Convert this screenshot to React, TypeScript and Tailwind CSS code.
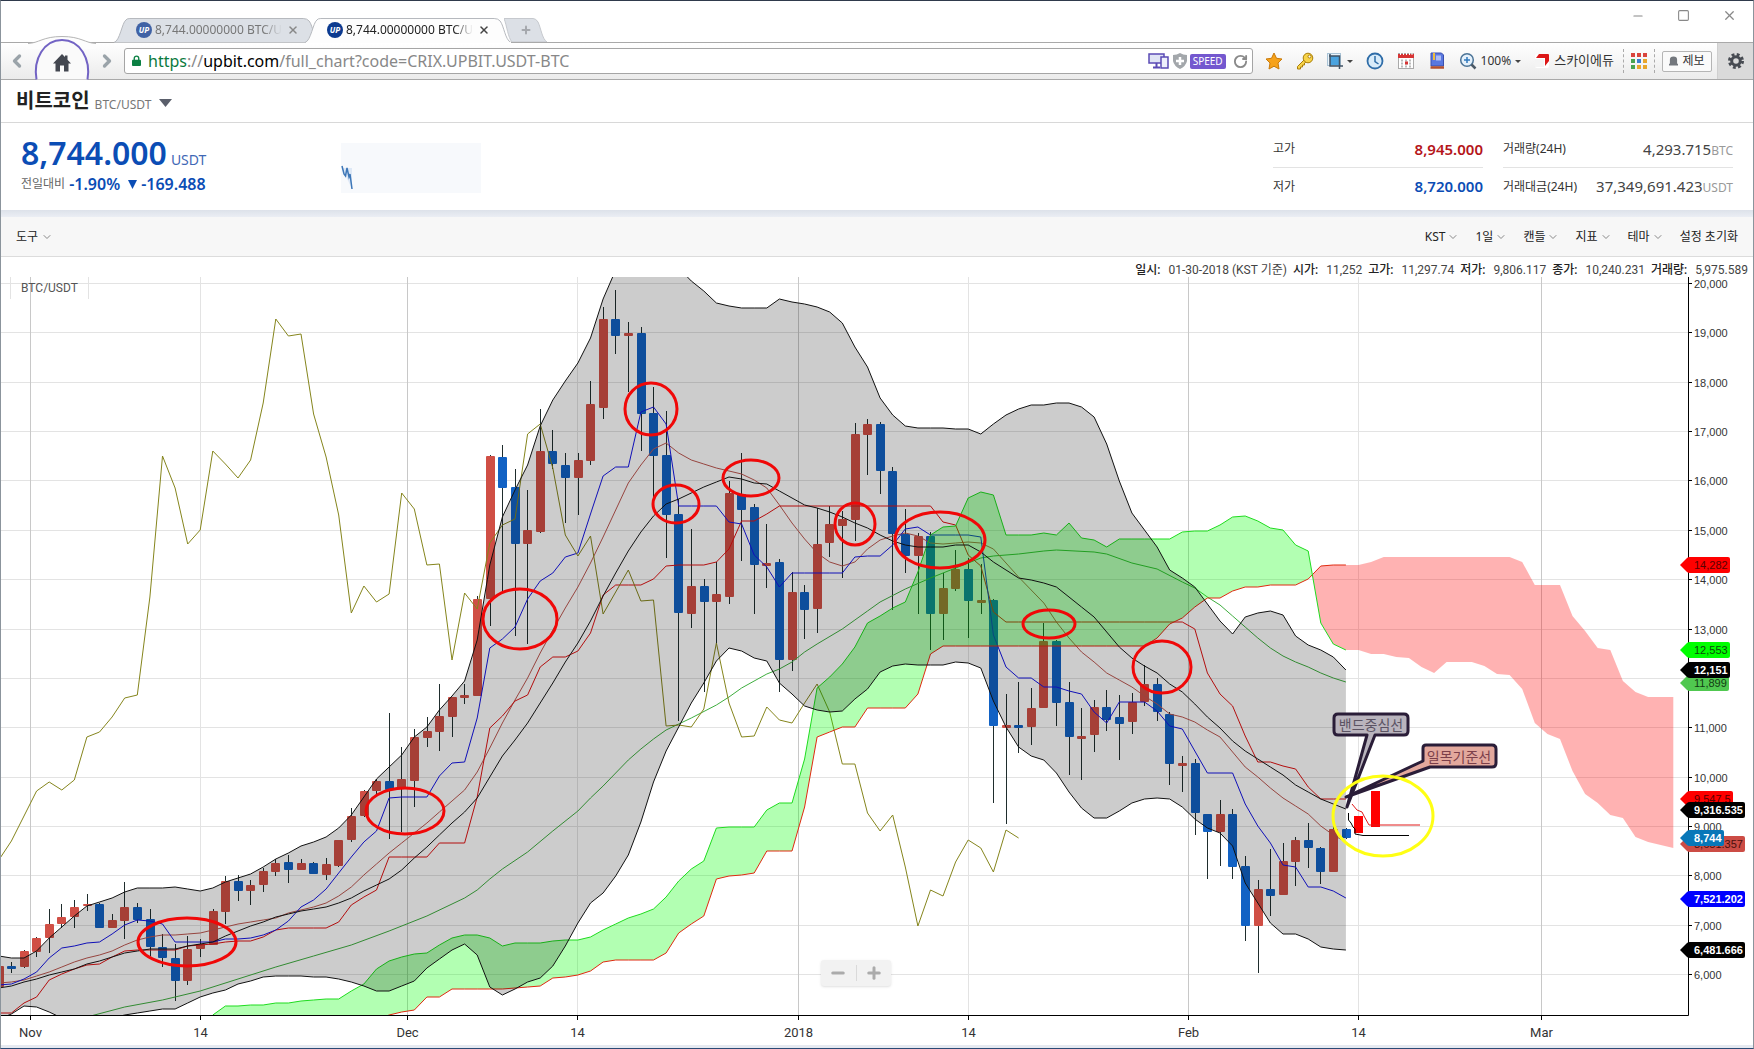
import { useState } from 'react';
import type { ReactNode } from 'react';
import { ChevronDown, ChevronLeft, ChevronRight, Minus, Plus, RotateCw, Square, X } from 'lucide-react';

// One slot per trading day; slot 16 is Nov 14.
const slotX = (n: number) => -1.2 + 12.59 * n;

// direction, body top, body bottom, wick top, wick bottom
type Candle = ['u' | 'd', number, number, number, number];

const candles: Candle[] = [
    ['u', 966, 987, 966, 987], ['d', 966, 969, 962, 973], ['u', 951, 967, 950, 968], ['u', 938, 952, 937, 957],
    ['u', 924, 938, 909, 953], ['u', 917, 924, 904, 928], ['u', 907, 917, 900, 928], ['u', 904, 906, 894, 911],
    ['d', 904, 928, 903, 928], ['u', 920, 928, 914, 928], ['u', 907, 921, 882, 939], ['d', 907, 920, 903, 923],
    ['d', 919, 947, 909, 956], ['d', 947, 958, 934, 967], ['d', 958, 981, 944, 1001], ['u', 949, 981, 936, 985],
    ['u', 944, 949, 939, 957], ['u', 911, 945, 909, 945], ['u', 881, 912, 876, 924], ['d', 881, 891, 875, 901],
    ['u', 885, 891, 880, 905], ['u', 871, 885, 868, 892], ['u', 863, 872, 859, 876], ['d', 862, 870, 855, 883],
    ['u', 863, 870, 859, 870], ['d', 863, 874, 862, 874], ['u', 864, 875, 858, 880], ['u', 840, 866, 840, 867],
    ['u', 816, 840, 808, 842], ['u', 791, 816, 790, 817], ['u', 781, 791, 779, 794], ['d', 781, 790, 713, 839],
    ['u', 779, 789, 747, 832], ['u', 737, 781, 729, 807], ['u', 731, 738, 717, 747], ['u', 716, 732, 684, 751],
    ['u', 697, 717, 697, 737], ['u', 695, 698, 684, 704], ['u', 599, 696, 596, 696], ['u', 456, 599, 455, 626],
    ['d', 457, 488, 445, 592], ['d', 487, 544, 469, 636], ['u', 530, 544, 490, 644], ['u', 451, 532, 409, 533],
    ['d', 451, 464, 430, 469], ['d', 465, 478, 453, 523], ['u', 460, 478, 453, 515], ['u', 404, 461, 381, 465],
    ['u', 319, 408, 307, 419], ['d', 319, 336, 290, 354], ['u', 333, 336, 322, 392], ['d', 333, 414, 327, 451],
    ['d', 413, 456, 387, 497], ['d', 455, 515, 411, 558], ['d', 514, 613, 499, 721], ['u', 586, 614, 529, 628],
    ['d', 586, 602, 579, 692], ['u', 594, 602, 562, 643], ['u', 493, 597, 481, 604], ['d', 494, 510, 453, 561],
    ['d', 507, 565, 504, 614], ['u', 563, 566, 524, 588], ['d', 562, 660, 559, 692], ['u', 592, 660, 572, 671],
    ['d', 592, 610, 585, 639], ['u', 544, 609, 508, 633], ['u', 524, 543, 506, 557], ['u', 519, 526, 511, 578],
    ['u', 434, 520, 423, 541], ['u', 424, 435, 419, 475], ['d', 424, 471, 422, 494], ['d', 471, 534, 467, 610],
    ['d', 534, 556, 509, 573], ['u', 536, 556, 533, 614], ['d', 536, 614, 532, 650], ['u', 588, 614, 573, 640],
    ['u', 569, 589, 550, 591], ['d', 569, 601, 558, 638], ['u', 600, 603, 564, 614], ['d', 600, 726, 599, 803],
    ['u', 725, 728, 694, 824], ['d', 725, 728, 682, 753], ['u', 708, 727, 688, 745], ['u', 641, 708, 623, 708],
    ['d', 641, 703, 640, 726], ['d', 702, 737, 682, 775], ['u', 736, 739, 708, 780], ['u', 707, 735, 700, 752],
    ['d', 707, 720, 690, 731], ['d', 717, 724, 695, 760], ['u', 702, 722, 693, 734], ['u', 684, 702, 665, 706],
    ['d', 684, 712, 678, 721], ['d', 714, 764, 712, 785], ['u', 763, 766, 756, 792], ['d', 763, 813, 759, 835],
    ['d', 814, 832, 814, 879], ['u', 814, 832, 800, 866], ['d', 814, 867, 809, 879], ['d', 866, 926, 856, 941],
    ['u', 889, 926, 880, 973], ['d', 889, 896, 849, 916], ['u', 861, 895, 843, 895], ['u', 840, 862, 837, 886],
    ['d', 840, 848, 823, 868], ['d', 848, 872, 847, 884], ['u', 829, 872, 826, 872], ['d', 829, 838, 828, 839],
];

const upperBand = [
    956, 958, 958, 951, 938, 927, 916, 906, 902, 898, 892, 888, 888, 888, 887, 889, 891, 888, 882, 878, 874, 867, 859,
    853, 846, 842, 837, 828, 815, 797, 779, 767, 755, 737, 727, 710, 696, 681, 640, 565, 517, 490, 465, 426, 400, 381,
    363, 338, 299, 270, 255, 250, 250, 258, 268, 281, 291, 303, 306, 308, 308, 308, 299, 302, 304, 307, 312, 323, 347,
    367, 398, 415, 426, 428, 428, 428, 429, 429, 434, 424, 415, 409, 405, 405, 403, 403, 407, 417, 444, 481, 513, 530,
    547, 570, 578, 587, 604, 621, 634, 617, 613, 611, 615, 636, 645, 650, 657, 670,
];

const lowerBand = [
    1019, 1014, 1006, 1007, 1012, 1018, 1020, 1020, 1020, 1018, 1015, 1013, 1011, 1009, 1009, 1003, 997, 993, 990, 984,
    981, 977, 976, 976, 976, 977, 977, 979, 982, 986, 991, 991, 986, 981, 968, 959, 950, 944, 955, 987, 995, 989, 982,
    978, 966, 946, 923, 903, 893, 876, 855, 822, 782, 751, 727, 703, 683, 661, 648, 651, 658, 661, 683, 694, 706, 710,
    712, 711, 699, 689, 672, 666, 664, 665, 665, 665, 662, 663, 668, 701, 727, 747, 756, 760, 773, 792, 808, 818, 818,
    811, 803, 799, 798, 799, 807, 819, 828, 833, 846, 883, 903, 923, 934, 934, 939, 947, 949, 950,
];

const middleBand = [
    988, 986, 982, 979, 975, 972, 969, 964, 961, 957, 953, 951, 949, 949, 949, 946, 944, 942, 936, 931, 926, 922, 917,
    914, 911, 909, 907, 903, 898, 891, 885, 879, 870, 858, 847, 835, 823, 812, 798, 777, 756, 740, 723, 703, 683, 662,
    643, 621, 596, 573, 551, 532, 516, 504, 499, 493, 487, 482, 477, 479, 483, 484, 491, 498, 505, 508, 512, 517, 523,
    528, 535, 541, 545, 547, 547, 547, 545, 545, 552, 562, 570, 578, 580, 583, 587, 597, 607, 617, 632, 647, 658, 666,
    673, 684, 692, 704, 717, 728, 741, 751, 759, 767, 775, 785, 792, 799, 804, 809,
];

const conversionLine = [
    985, 984, 979, 972, 958, 948, 946, 943, 942, 934, 925, 920, 921, 924, 942, 942, 942, 942, 939, 939, 938, 935, 930,
    921, 907, 900, 889, 873, 857, 842, 831, 798, 797, 797, 797, 776, 763, 762, 718, 648, 639, 627, 599, 581, 573, 557,
    553, 514, 476, 467, 467, 412, 407, 424, 506, 506, 506, 506, 522, 524, 555, 567, 587, 573, 573, 573, 573, 573, 557,
    556, 556, 545, 529, 527, 535, 535, 535, 535, 537, 635, 667, 678, 678, 687, 687, 691, 694, 712, 723, 702, 702, 702,
    711, 726, 729, 751, 773, 773, 773, 804, 826, 843, 865, 867, 887, 887, 891, 898,
];

const baseLine = [
    1013, 1013, 1003, 997, 980, 974, 969, 965, 964, 957, 951, 950, 950, 950, 950, 946, 945, 944, 942, 941, 941, 937,
    930, 928, 928, 928, 928, 922, 905, 897, 890, 857, 857, 857, 857, 843, 843, 843, 797, 728, 716, 701, 695, 667, 657,
    657, 651, 633, 595, 585, 585, 585, 579, 566, 565, 565, 565, 562, 549, 521, 521, 514, 506, 506, 506, 506, 506, 506,
    506, 506, 506, 506, 506, 506, 506, 522, 525, 555, 566, 612, 622, 622, 622, 622, 622, 622, 622, 622, 622, 622, 622,
    622, 622, 622, 622, 629, 673, 694, 706, 736, 762, 762, 766, 769, 787, 799, 799, 799,
];

const shortAverage = [
    983, 982, 980, 976, 972, 967, 962, 958, 955, 951, 945, 940, 937, 935, 935, 934, 933, 930, 927, 924, 922, 920, 918,
    913, 910, 907, 903, 896, 887, 875, 864, 853, 843, 833, 823, 812, 801, 790, 772, 748, 723, 700, 678, 653, 630, 608,
    587, 563, 537, 510, 483, 465, 449, 443, 453, 460, 464, 468, 471, 474, 480, 488, 505, 523, 539, 553, 562, 566, 562,
    549, 540, 536, 533, 536, 543, 544, 543, 542, 543, 549, 563, 577, 590, 603, 622, 638, 652, 662, 673, 680, 687, 696,
    704, 714, 717, 722, 730, 737, 752, 767, 777, 788, 798, 806, 814, 826, 835, 842,
];

const laggingSpan = [
    860, 841, 816, 791, 782, 790, 780, 737, 732, 717, 698, 695, 597, 456, 488, 544, 530, 451, 464, 478, 460, 403, 319,
    336, 334, 414, 457, 515, 613, 586, 602, 594, 493, 509, 565, 564, 660, 593, 609, 543, 525, 519, 434, 424, 468, 535,
    556, 536, 614, 592, 570, 601, 600, 726, 725, 727, 709, 643, 703, 737, 736, 707, 720, 723, 703, 684, 712, 764, 764,
    813, 831, 815, 867, 926, 890, 896, 862, 840, 848, 872, 830, 838,
];

const longAverage: [number, number][] = [
    [7, 1017], [10, 1007], [13, 1000], [16, 991], [19, 979], [22, 967], [25, 956], [28, 945], [31, 931], [34, 916],
    [37, 898], [38, 890], [39, 879], [40, 869], [42, 852], [44, 831], [46, 811], [47, 798], [48, 786], [49, 773],
    [50, 760], [51, 749], [52, 739], [53, 730], [54, 724], [55, 718], [57, 705], [58, 697], [59, 688], [61, 674],
    [62, 669], [63, 662], [64, 652], [65, 644], [67, 629], [68, 620], [69, 611], [70, 602], [72, 589], [74, 578],
    [76, 568], [78, 558], [79, 556], [81, 554], [83, 551], [84, 550], [87, 552], [88, 554], [90, 563], [92, 569],
    [94, 582], [95, 588], [96, 597], [97, 605], [98, 616], [99, 627], [100, 638], [101, 648], [102, 656], [103, 662],
    [104, 667], [105, 673], [106, 678], [107, 682],
];

// Both spans start at slot 17 and run 26 days past the last candle.
const CLOUD_START = 17;
const spanA = [
    1015, 1006, 1006, 1005, 1005, 1003, 1003, 1001, 1000, 999, 999, 991, 984, 969, 961, 957, 954, 953, 945, 938, 935,
    935, 938, 946, 943, 943, 943, 941, 940, 940, 937, 930, 924, 918, 914, 909, 897, 881, 869, 861, 828, 827, 827, 827,
    810, 803, 803, 759, 688, 677, 664, 647, 623, 616, 608, 602, 572, 535, 527, 526, 498, 492, 495, 535, 535, 535, 533,
    535, 523, 538, 540, 547, 539, 539, 539, 539, 539, 532, 531, 531, 525, 517, 516, 521, 528, 530, 545, 551, 623, 644,
    650, 650, 654, 654, 657, 658, 667, 673, 662, 662, 662, 666, 674, 675, 689, 723, 734, 739, 771, 794, 803, 815, 818,
    837, 842, 845, 848,
];
const spanB = [
    1030, 1030, 1030, 1030, 1030, 1030, 1030, 1030, 1030, 1030, 1030, 1030, 1030, 1020, 1015, 1012, 1010, 997, 997,
    989, 989, 989, 989, 989, 988, 987, 986, 978, 977, 975, 971, 962, 960, 960, 960, 960, 953, 933, 924, 916, 879, 876,
    875, 873, 851, 851, 851, 807, 737, 732, 727, 727, 708, 708, 708, 708, 694, 654, 646, 646, 646, 646, 646, 646, 646,
    646, 646, 646, 646, 646, 646, 646, 646, 646, 646, 638, 624, 618, 607, 598, 598, 591, 587, 587, 585, 585, 585, 579,
    566, 565, 565, 565, 562, 557, 557, 557, 557, 557, 557, 557, 557, 557, 557, 557, 562, 585, 585, 585, 616, 631, 648,
    650, 681, 692, 697, 697, 697,
];

// The spans swap places just after slot 104.
const CROSS: [number, number] = [104.33, 575];

const toSlots = (ys: number[], start = 0): [number, number][] => ys.map((y, i) => [start + i, y]);
const toPoints = (pts: [number, number][]) => pts.map(([n, y]) => `${slotX(n).toFixed(1)},${y}`).join(' ');

const cloudA = toSlots(spanA, CLOUD_START);
const cloudB = toSlots(spanB, CLOUD_START);
const bullCloud = [
    ...cloudA.filter(([n]) => n < CROSS[0]),
    CROSS,
    ...cloudB.filter(([n]) => n < CROSS[0]).reverse(),
];
const bearCloud = [
    CROSS,
    ...cloudB.filter(([n]) => n > CROSS[0]),
    ...cloudA.filter(([n]) => n > CROSS[0]).reverse(),
];
const LAST = candles.length - 1;

const priceTicks = Array.from({ length: 15 }, (_, i) => ({
    label: `${20 - i},000`,
    y: Math.round(283 + i * 49.36) + 0.5,
}));

const dateTicks = [
    { x: 30.5, label: 'Nov', major: true },
    { x: 200.5, label: '14', major: false },
    { x: 407.5, label: 'Dec', major: true },
    { x: 577.5, label: '14', major: false },
    { x: 798.5, label: '2018', major: true },
    { x: 968.5, label: '14', major: false },
    { x: 1188.5, label: 'Feb', major: true },
    { x: 1358.5, label: '14', major: false },
    { x: 1541.5, label: 'Mar', major: true },
];

const priceTags = [
    { y: 565, right: 1730, text: '14,282', fill: '#ff0000', color: '#5a0000' },
    { y: 650, right: 1730, text: '12,553', fill: '#00ff00', color: '#0b4a0b' },
    { y: 683, right: 1729, text: '11,899', fill: '#50c850', color: '#123c12' },
    { y: 670, right: 1730, text: '12,151', fill: '#000000', color: '#ffffff' },
    { y: 799, right: 1733, text: '9,547.5', fill: '#ff0000', color: '#5a0000' },
    { y: 810, right: 1745, text: '9,316.535', fill: '#000000', color: '#ffffff' },
    { y: 844, right: 1745, text: '8,651.357', fill: '#cc4c45', color: '#4a0f0c' },
    { y: 838, right: 1724, text: '8,744', fill: '#0877b8', color: '#ffffff' },
    { y: 899, right: 1745, text: '7,521.202', fill: '#0000ff', color: '#ffffff' },
    { y: 950, right: 1745, text: '6,481.666', fill: '#000000', color: '#ffffff' },
];

// cx, cy, rx, ry
const circles = [
    [187, 942, 49, 24],
    [405, 811, 39, 23],
    [520, 619, 37, 30],
    [651, 409, 26, 26],
    [676, 504, 23, 19],
    [751, 478, 28, 18],
    [855, 524, 20, 21],
    [940, 540, 45, 28],
    [1049, 624, 26, 14],
    [1162, 667, 29, 26],
];

function PriceChart() {
    const band = toPoints([...toSlots(upperBand), ...toSlots(lowerBand).reverse()]);

    return (
        <svg viewBox="1 277 1752 768" className="block w-full h-auto" role="img" aria-label="BTC/USDT">
            <defs>
                <clipPath id="plot">
                    <rect x="1" y="277" width="1688" height="738" />
                </clipPath>
            </defs>

            {/* Grid */}
            {priceTicks.map((t) => (
                <line key={t.label} x1="1" x2="1688" y1={t.y} y2={t.y} stroke="#e3e3e3" />
            ))}
            {dateTicks.map((t) => (
                <line key={t.x} x1={t.x} x2={t.x} y1="277" y2="1015" stroke={t.major ? '#c8c8c8' : '#e3e3e3'} />
            ))}

            <g clipPath="url(#plot)" fill="none">
                {/* Candles */}
                {candles.map(([dir, top, bottom, high, low], n) => {
                    const x = Math.floor(slotX(n) + 0.2);
                    return (
                        <g key={n}>
                            <line x1={x + 0.5} x2={x + 0.5} y1={high} y2={low} stroke="#1f2d2d" />
                            <rect x={x - 4} y={top} width="9" height={bottom - top} rx="1" fill={dir === 'u' ? '#d04f45' : '#1262c4'} />
                        </g>
                    );
                })}

                {/* Indicator lines */}
                <polyline points={toPoints(longAverage)} stroke="#3fae3f" />
                <polyline points={toPoints(toSlots(shortAverage))} stroke="#bd5750" />
                <polyline points={toPoints(toSlots(baseLine))} stroke="#e01212" />
                <polyline points={toPoints(toSlots(conversionLine))} stroke="#1414e6" />
                <polyline points={toPoints(toSlots(laggingSpan))} stroke="#85851c" />

                {/* Cloud */}
                <polygon points={toPoints(bullCloud)} fill="#00ff00" fillOpacity="0.3" />
                <polygon points={toPoints(bearCloud)} fill="#ff0000" fillOpacity="0.3" />
                <polyline points={toPoints(cloudB.filter(([n]) => n <= LAST))} stroke="#e02a10" />
                <polyline points={toPoints(cloudA.filter(([n]) => n <= LAST))} stroke="#1fdc1f" />

                {/* Bollinger band */}
                <polygon points={band} fill="#000000" fillOpacity="0.2" />
                <polyline points={toPoints(toSlots(upperBand))} stroke="#111111" />
                <polyline points={toPoints(toSlots(lowerBand))} stroke="#111111" />
                <polyline points={toPoints(toSlots(middleBand))} stroke="#111111" />
            </g>

            {/* Axes */}
            <path d="M1 1015.5H1688.5V277" fill="none" stroke="#000000" />
            <g fontFamily="'Liberation Sans', Arial, sans-serif" fontSize="11" fill="#333333">
                {priceTicks.map((t) => (
                    <g key={t.label}>
                        <line x1="1688" x2="1692" y1={t.y} y2={t.y} stroke="#000000" />
                        <text x="1694" y={t.y + 4}>{t.label}</text>
                    </g>
                ))}
            </g>
            <g fontFamily="Roboto, 'Liberation Sans', sans-serif" fontSize="13" fill="#333333" textAnchor="middle">
                {dateTicks.map((t) => (
                    <g key={t.x}>
                        <line x1={t.x} x2={t.x} y1="1015" y2="1020" stroke="#000000" />
                        <text x={t.x} y="1037">{t.label}</text>
                    </g>
                ))}
            </g>

            {/* Price tags */}
            <g fontFamily="'Liberation Sans', Arial, sans-serif" fontSize="11">
                {priceTags.map((t) => (
                    <g key={t.text}>
                        <path
                            d={`M1680 ${t.y}L1687 ${t.y - 7}Q1688 ${t.y - 8} 1690 ${t.y - 8}H${t.right - 2}Q${t.right} ${t.y - 8} ${t.right} ${t.y - 6}V${t.y + 6}Q${t.right} ${t.y + 8} ${t.right - 2} ${t.y + 8}H1690Q1688 ${t.y + 8} 1687 ${t.y + 7}Z`}
                            fill={t.fill}
                        />
                        <text x="1694" y={t.y + 4} fill={t.color} fontWeight={t.color === '#ffffff' ? 700 : 400}>
                            {t.text}
                        </text>
                    </g>
                ))}
            </g>

            {/* Symbol label */}
            <path d="M10.5 277V299M88.5 277V299" stroke="#e3e3e3" />
            <text x="21" y="292" fontFamily="Roboto, 'Liberation Sans', sans-serif" fontSize="12" fill="#555555">
                BTC/USDT
            </text>

            {/* Hand-drawn notes */}
            <g fill="none" stroke="#f00808" strokeWidth="3">
                {circles.map(([cx, cy, rx, ry]) => (
                    <ellipse key={cx} cx={cx} cy={cy} rx={rx} ry={ry} />
                ))}
            </g>
            <g stroke="#2a1d38" strokeWidth="3" strokeLinejoin="round">
                <path d="M1426 745H1492Q1496 745 1496 749V763Q1496 767 1492 767H1430L1346 797L1423 761V748Q1423 745 1426 745Z" fill="#e3a89d" />
                <path d="M1338 714H1404Q1408 714 1408 718V731Q1408 735 1404 735H1375L1347 807L1367 735H1338Q1334 735 1334 731V718Q1334 714 1338 714Z" fill="#b9b4bd" />
            </g>
            <g fontFamily="'Noto Sans CJK KR', sans-serif" fontSize="14" textAnchor="middle">
                <text x="1371" y="730" fill="#5b5363">밴드중심선</text>
                <text x="1459" y="762" fill="#7c3f4a">일목기준선</text>
            </g>
            <rect x="1354" y="816" width="9" height="17" fill="#ff0000" />
            <rect x="1371" y="791" width="9" height="36" fill="#ff0000" />
            <path d="M1352 804L1357 810L1362 812L1364 816L1369 825H1420" fill="none" stroke="#e01818" />
            <path d="M1348.5 813V820L1351 823L1353 827L1355 829V834L1363 835.5H1409" fill="none" stroke="#000000" />
            <ellipse cx="1383" cy="816" rx="50" ry="40" fill="none" stroke="#ffff14" strokeWidth="3" />
        </svg>
    );
}

function BrowserTab({ active = false }: { active?: boolean }) {
    return (
        <div className={`relative h-6 w-[207px] flex items-center pl-[22px] ${active ? '-ml-[16px] z-10' : ''}`}>
            <svg className="absolute inset-0 w-full h-[25px]" viewBox="0 0 209 25" preserveAspectRatio="none">
                <path
                    d="M0 24.5C6 23 8 5 12 2Q13 .5 16 .5H191Q195 .5 197 3C201 8 202 22 208 24.5"
                    fill={active ? '#fdfdfd' : '#dce0e6'}
                    stroke="#b5b8bd"
                />
                {active && <path d="M1 25H208" stroke="#fdfdfd" strokeWidth="2" />}
            </svg>
            <span className={`relative w-4 h-4 rounded-full flex items-center justify-center text-[8px] italic font-bold text-white ${active ? 'bg-[#0b3a8f]' : 'bg-[#4062a5]'}`}>
                UP
            </span>
            <button className={`relative ml-[3px] whitespace-nowrap text-left text-[12px] mask-r-from-85% ${active ? 'text-[#222]' : 'text-[#777]'}`}>
                8,744.00000000 BTC/U
            </button>
            <button aria-label="Close tab" className={`relative ml-auto mr-[22px] ${active ? 'text-[#444]' : 'text-[#888]'}`}>
                <X size={12} strokeWidth={3} />
            </button>
        </div>
    );
}

function TitleBar() {
    return (
        <div className="h-[41px] flex items-end bg-white">
            <div className="flex items-end pl-[113px]">
                <BrowserTab />
                <BrowserTab active />
                <button aria-label="New tab" className="relative -ml-[8px] w-[44px] h-6 flex items-center justify-center text-[#a5a8ad]">
                    <svg className="absolute inset-0 w-full h-full" viewBox="0 0 44 24" preserveAspectRatio="none">
                        <path d="M0 .5H29Q32 .5 34 4C37 10 38 21 43 24H8C4 20 3 8 0 .5Z" fill="#dce0e6" stroke="#c6c9ce" />
                    </svg>
                    <Plus size={12} strokeWidth={4} className="relative" />
                </button>
            </div>
            <div className="ml-auto self-start flex items-center gap-[32px] pr-4 pt-[7px] text-[#888]">
                <button aria-label="Minimize"><Minus size={14} strokeWidth={2} /></button>
                <button aria-label="Maximize"><Square size={13} strokeWidth={2} /></button>
                <button aria-label="Close"><X size={15} strokeWidth={2} /></button>
            </div>
        </div>
    );
}

function ToolIcon({ label, children }: { label: string; children: ReactNode }) {
    return (
        <button aria-label={label} className="w-[18px] h-[18px] shrink-0">
            <svg viewBox="0 0 18 18" className="w-full h-full">{children}</svg>
        </button>
    );
}

const Caret = () => (
    <svg viewBox="0 0 6 3" className="w-[6px] h-[3px]">
        <path d="M0 0H6L3 3Z" fill="#444" />
    </svg>
);

function Toolbar() {
    return (
        <div className="h-[38px] flex items-center border-y border-[#a9a9a9] bg-gradient-to-b from-white to-[#ebebeb]">
            <button aria-label="Back" className="ml-[6px] text-[#9aa3a9]"><ChevronLeft size={20} strokeWidth={4} /></button>
            <button aria-label="Home" className="relative z-10 w-[70px] h-[45px] -mt-[8px]">
                <svg viewBox="0 0 70 45" className="w-full h-full">
                    <path d="M1 8.5C12 8 16 1.5 35 1.5S58 8 69 8.5V14H1Z" fill="#fdfdfd" />
                    <path d="M1 8.5C12 8 16 1.5 35 1.5S58 8 69 8.5" fill="none" stroke="#b5b5b5" />
                    <path d="M9.5 44.5C6 24 17 5 35 5S64 24 60.5 44.5" fill="#fafafa" stroke="#7263c4" strokeWidth="2" />
                    <path d="M35 19L26 28.500H28.500V36.500H33V30.500H37V36.500H41.500V28.500H44L40.500 24.800V20.500H38V22Z" fill="#434750" />
                </svg>
            </button>
            <button aria-label="Forward" className="text-[#9aa3a9]"><ChevronRight size={20} strokeWidth={4} /></button>

            <div className="ml-[7px] flex-1 h-[26px] flex items-center bg-white border border-[#a5a5a5] rounded-[3px] pl-[7px] pr-1">
                <svg viewBox="0 0 10 13" className="w-[9px] h-3 shrink-0">
                    <path d="M2.500 6V3.500a2.500 2.500 0 0 1 5 0V6" fill="none" stroke="#0b8043" strokeWidth="1.500" />
                    <rect y="5" width="10" height="7" rx="1" fill="#0b8043" />
                </svg>
                <a href="https://upbit.com/full_chart?code=CRIX.UPBIT.USDT-BTC" className="ml-[7px] flex-1 whitespace-nowrap text-[16px] leading-6 text-[#888]">
                    <span className="text-[#0b7a3e]">https</span>://<span className="text-black">upbit.com</span>/full_chart?code=CRIX.UPBIT.USDT-BTC
                </a>
                <div className="flex items-center gap-[3px]">
                    <svg viewBox="0 0 22 18" className="w-[22px] h-[18px]">
                        <path d="M1 2H16V11H1Z" fill="#dfe3f5" stroke="#5b4bb5" strokeWidth="1.500" />
                        <path d="M5 15.500H12M8.500 11V15" stroke="#5b4bb5" strokeWidth="2" />
                        <path d="M13 5H20V16H13Z" fill="#eef0fb" stroke="#5b4bb5" strokeWidth="1.500" />
                    </svg>
                    <svg viewBox="0 0 14 16" className="w-[14px] h-4">
                        <path d="M7 0Q10 2 14 2V8Q13 13 7 16Q1 13 0 8V2Q4 2 7 0Z" fill="#a3a7ab" />
                        <path d="M7 4V12M3 8H11" stroke="#fff" strokeWidth="2.500" />
                    </svg>
                    <button className="h-[15px] px-[3px] rounded-[2px] bg-[#7458cf] text-white text-[10px] leading-[15px]">SPEED</button>
                    <button aria-label="Reload" className="ml-1 text-[#8a8a8a]"><RotateCw size={15} strokeWidth={3} /></button>
                </div>
            </div>

            <div className="flex items-center gap-[13px] pl-3 text-[13px] text-[#333] whitespace-nowrap">
                <ToolIcon label="Bookmarks">
                    <path d="M9 1L11.500 6.300L17 7L13 11L14 17L9 14.200L4 17L5 11L1 7L6.500 6.300Z" fill="#f6a21b" stroke="#c97a0a" />
                </ToolIcon>
                <ToolIcon label="Passwords">
                    <path d="M8 8L1.500 14.500V17H4.500V15H6.500V13H8.500V11L10 10" fill="#f7d348" stroke="#a97d08" />
                    <circle cx="12" cy="6" r="4.800" fill="#f7d348" stroke="#a97d08" />
                    <circle cx="13.500" cy="4.500" r="1.500" fill="#fff" stroke="#a97d08" />
                </ToolIcon>
                <button aria-label="Capture" className="flex items-center gap-1">
                    <svg viewBox="0 0 16 18" className="w-4 h-[18px]">
                        <rect x=".5" y="1.500" width="13" height="12" fill="#e9f3fa" stroke="#a9c3d6" />
                        <rect x="3" y="4" width="9" height="9" fill="#4aa3df" />
                        <path d="M3 2V14H16M2 4H12.500V17" fill="none" stroke="#3f5264" strokeWidth="1.500" />
                    </svg>
                    <Caret />
                </button>
                <ToolIcon label="History">
                    <circle cx="9" cy="9" r="7.500" fill="#d9ecfa" stroke="#2f6da8" strokeWidth="1.800" />
                    <path d="M9 4V9.500L12.500 12" fill="none" stroke="#2f6da8" strokeWidth="1.500" />
                </ToolIcon>
                <ToolIcon label="Calendar">
                    <rect x="1.500" y="1.500" width="15" height="15" fill="#fff" stroke="#aaa" />
                    <path d="M1 2H17V6H1Z" fill="#d63434" />
                    <path d="M3.500 1V3M6.500 1V3M9.500 1V3M12.500 1V3M15 1V3" stroke="#fff" />
                    <path d="M4 8.500H14M4 11.500H14M4 14.500H14" stroke="#bbb" strokeWidth="2" strokeDasharray="2 2" />
                    <rect x="8" y="9.500" width="3" height="3" fill="#d63434" />
                </ToolIcon>
                <ToolIcon label="Dictionary">
                    <path d="M3 1H13.500L15.500 3V14H3Z" fill="#5a78e0" stroke="#3a4fae" />
                    <path d="M2.500 15.500H16" stroke="#b4502f" strokeWidth="2.500" />
                    <rect x="8" y="3.500" width="5" height="5" fill="#aebdf5" />
                    <rect x="5" y="1" width="2" height="7" fill="#f0bd3c" />
                </ToolIcon>
                <button className="flex items-center text-[12px]">
                    <svg viewBox="0 0 18 18" className="w-[18px] h-[18px]">
                        <circle cx="8" cy="8" r="6.300" fill="#e5f1fb" stroke="#4b7396" strokeWidth="1.500" />
                        <path d="M8 5V11M5 8H11" stroke="#2f78bd" strokeWidth="1.500" />
                        <path d="M12.500 12.500L16.500 16.500" stroke="#4b5966" strokeWidth="2.500" />
                    </svg>
                    <span className="ml-1 mr-1">100%</span>
                    <Caret />
                </button>
                <button className="flex items-center gap-1">
                    <svg viewBox="0 0 16 18" className="w-4 h-[18px]">
                        <rect x="1" y="2" width="14" height="14" rx="2" fill="#fff" />
                        <path d="M5 2H14Q15 2 15 3V9L11 14V6H2Z" fill="#dc1717" />
                        <path d="M1 7H10V15H1Z" fill="#f4f4f4" />
                    </svg>
                    스카이에듀
                </button>
            </div>
            <div className="flex items-center gap-[7px] pl-[9px]">
                <span className="h-6 border-l border-dashed border-[#aaa]" />
                <button aria-label="Apps" className="grid grid-cols-3 gap-[2px]">
                    <i className="w-1 h-1 bg-[#d9453d]" /><i className="w-1 h-1 bg-[#d9453d]" /><i className="w-1 h-1 bg-[#d9453d]" />
                    <i className="w-1 h-1 bg-[#49a350]" /><i className="w-1 h-1 bg-[#3c7fd0]" /><i className="w-1 h-1 bg-[#e8a62c]" />
                    <i className="w-1 h-1 bg-[#49a350]" /><i className="w-1 h-1 bg-[#e8a62c]" /><i className="w-1 h-1 bg-[#e8a62c]" />
                </button>
                <span className="h-6 border-l border-dashed border-[#aaa]" />
                <button className="w-[50px] h-[21px] flex items-center justify-center gap-1 rounded-[2px] border border-[#b5b5b5] bg-[#fafafa] text-[12px] text-[#333]">
                    <svg viewBox="0 0 10 10" className="w-[9px] h-[10px]">
                        <path d="M1 8V3.500a4 3.500 0 0 1 8 0V8H10V10H0V8Z" fill="#73777d" />
                    </svg>
                    제보
                </button>
            </div>
            <button aria-label="Settings" className="ml-[5px] w-[36px] h-full flex items-center justify-center bg-[#dadada] border-l border-[#cfcfcf]">
                <svg viewBox="0 0 16 16" className="w-4 h-4">
                    <circle cx="8" cy="8" r="6.500" fill="none" stroke="#474b52" strokeWidth="3" strokeDasharray="2.800 2.300" />
                    <circle cx="8" cy="8" r="4.300" fill="none" stroke="#474b52" strokeWidth="3" />
                </svg>
            </button>
        </div>
    );
}

function StatRow({ label, value, unit, tone }: { label: string; value: string; unit?: string; tone: string }) {
    return (
        <div className="h-[37px] flex items-center justify-between">
            <dt className="text-[12px] text-[#333]">{label}</dt>
            <dd className={`text-[15px] ${tone}`}>
                {value}
                {unit && <span className="text-[12px] text-[#999]">{unit}</span>}
            </dd>
        </div>
    );
}

function MarketSummary() {
    return (
        <section className="h-[87px] flex items-start bg-white">
            <div className="w-[340px] pl-5 pt-[10px] text-[#0b4db5]">
                <p className="flex items-baseline leading-10">
                    <strong className="text-[32px] font-semibold">8,744.000</strong>
                    <span className="ml-1 text-[14px] text-[#3f68b5]">USDT</span>
                </p>
                <p className="flex items-center leading-5 -mt-[6px]">
                    <span className="text-[12px] text-[#666]">전일대비</span>
                    <span className="ml-1 text-[16px] font-semibold">-1.90%</span>
                    <svg viewBox="0 0 9 9" className="ml-2 mr-1 w-[9px] h-[9px]"><path d="M0 0H9L4.500 9Z" fill="#0b4db5" /></svg>
                    <span className="text-[16px] font-semibold">-169.488</span>
                </p>
            </div>
            <svg viewBox="0 0 140 50" className="mt-5 w-[140px] h-[50px] bg-[#f7f9fc]">
                <path d="M1 25H11V46Z" fill="#dde8f6" />
                <path d="M1 23L3 31L4.500 33L6 25L8 34L9 31L11 46" fill="none" stroke="#3d77b8" strokeWidth="1.500" />
            </svg>
            <div className="ml-auto flex gap-5 pr-5 pt-[8px]">
                <dl className="w-[210px] divide-y divide-[#e3e3e3]">
                    <StatRow label="고가" value="8,945.000" tone="font-semibold text-[#b5151a]" />
                    <StatRow label="저가" value="8,720.000" tone="font-semibold text-[#0b4db5]" />
                </dl>
                <dl className="w-[230px] divide-y divide-[#e3e3e3]">
                    <StatRow label="거래량(24H)" value="4,293.715" unit="BTC" tone="text-[#444]" />
                    <StatRow label="거래대금(24H)" value="37,349,691.423" unit="USDT" tone="text-[#444]" />
                </dl>
            </div>
        </section>
    );
}

const menus = ['KST', '1일', '캔들', '지표', '테마'];

function ChartMenu() {
    return (
        <nav className="h-10 flex items-center justify-between px-[15px] bg-[#f7f7f7] border-b border-[#dcdcdc] text-[12px] text-[#222]">
            <button className="flex items-center gap-[3px]">
                도구 <ChevronDown size={12} className="text-[#888]" />
            </button>
            <div className="flex items-center gap-4">
                {menus.map((name) => (
                    <button key={name} className="flex items-center gap-[2px]">
                        {name} <ChevronDown size={12} className="text-[#888]" />
                    </button>
                ))}
                <button>설정 초기화</button>
            </div>
        </nav>
    );
}

const quote = [
    ['일시:', '01-30-2018 (KST 기준)'],
    ['시가:', '11,252'],
    ['고가:', '11,297.74'],
    ['저가:', '9,806.117'],
    ['종가:', '10,240.231'],
    ['거래량:', '5,975.589'],
];

export default function App() {
    const [, setZoom] = useState(1);

    return (
        <div className="min-h-screen flex flex-col bg-white border border-t-[#2f3a4c] border-x-[#8b949c] border-b-[#2b4a75] font-['Noto_Sans','Noto_Sans_CJK_KR',sans-serif]">
            <TitleBar />
            <Toolbar />

            <header className="h-[43px] flex items-center pl-[15px] border-b border-[#d8d8d8]">
                <h1 className="text-[20px] font-bold text-[#222]">비트코인</h1>
                <span className="ml-[5px] mt-2 text-[12px] text-[#777]">BTC/USDT</span>
                <button aria-label="Select market" className="ml-2 mt-1">
                    <svg viewBox="0 0 13 8" className="w-[13px] h-2"><path d="M0 0H13L6.500 8Z" fill="#5a5f6b" /></svg>
                </button>
            </header>

            <MarketSummary />
            <div className="h-[7px] bg-gradient-to-b from-[#dde2ea] to-[#ebeef4]" />
            <ChartMenu />

            <p className="h-5 flex items-center justify-end gap-[6px] pr-[5px] pt-[5px] text-[12px] text-[#444] whitespace-nowrap font-[Roboto,'Noto_Sans_CJK_KR',sans-serif]">
                {quote.map(([label, value]) => (
                    <span key={label} className="flex gap-2">
                        <b className="font-medium text-[#222]">{label}</b>
                        {value}
                    </span>
                ))}
            </p>

            <main className="relative">
                <PriceChart />
                <div className="absolute bottom-[59px] left-[820px] h-[26px] w-[70px] flex items-center rounded-[3px] bg-[#f2f2f2] shadow-sm text-[#ababab]">
                    <button aria-label="Zoom out" onClick={() => setZoom((z) => z / 2)} className="flex-1 flex justify-center">
                        <Minus size={18} strokeWidth={4} />
                    </button>
                    <span className="h-4 border-l border-[#dadada]" />
                    <button aria-label="Zoom in" onClick={() => setZoom((z) => z * 2)} className="flex-1 flex justify-center">
                        <Plus size={18} strokeWidth={4} />
                    </button>
                </div>
            </main>
            <footer className="h-[3px] mt-auto bg-[#e6eaf1]" />
        </div>
    );
}
